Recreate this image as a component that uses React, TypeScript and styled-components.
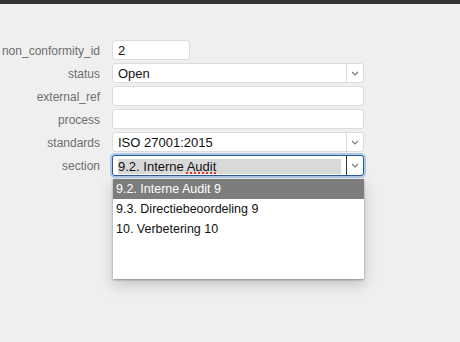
import React from "react";
import styled, { createGlobalStyle } from "styled-components";

const Global = createGlobalStyle`
  html, body { margin: 0; padding: 0; background: #efefef; }
  body { font-family: "Liberation Sans", Arial, sans-serif; width: 460px; height: 342px; overflow: hidden; }
`;

const TopBar = styled.div`
  height: 4px;
  background: #333333;
`;

const Form = styled.div`
  display: grid;
  grid-template-columns: 100px 252px;
  grid-template-rows: 20px 20px 20px 20px 20px 21px;
  column-gap: 12px;
  row-gap: 3px;
  padding-top: 36px;
`;

const Label = styled.div`
  font-size: 12px;
  color: #6e6e6e;
  text-align: right;
  height: 20px;
  line-height: 22px;
`;

const Field = styled.div<{ $w?: number; $focus?: boolean }>`
  position: relative;
  box-sizing: border-box;
  height: ${(p) => (p.$focus ? "21px" : "20px")};
  width: ${(p) => (p.$w ? `${p.$w}px` : "100%")};
  background: #fff;
  border: 1px solid ${(p) => (p.$focus ? "#2c5b92" : "#dcdcdc")};
  border-radius: 3px;
  box-shadow: ${(p) => (p.$focus ? "0 0 0 2px rgba(120,170,225,0.55)" : "none")};
  display: flex;
  align-items: center;
  font-size: 13px;
  color: #111;
`;

const Value = styled.div`
  flex: 1;
  padding-left: 5px;
  padding-top: 1px;
  line-height: 18px;
  white-space: nowrap;
  overflow: hidden;
`;

const Selected = styled.div`
  flex: 1;
  margin: 1px 5px 0 5px;
  background: #d9d9d9;
  line-height: 15px;
  white-space: nowrap;
`;

const Misspelled = styled.span`
  text-decoration: underline dotted #e23b2e;
  text-decoration-thickness: 2px;
  text-underline-offset: 2px;
`;

const ArrowBox = styled.div<{ $focus?: boolean }>`
  width: 16px;
  height: 100%;
  border-left: 1px solid ${(p) => (p.$focus ? "#333" : "#dcdcdc")};
  display: flex;
  align-items: center;
  justify-content: center;
`;

const Menu = styled.div`
  position: absolute;
  left: 113px;
  top: 179px;
  width: 251px;
  height: 100px;
  background: #fff;
  box-shadow: 0 1px 2px rgba(0,0,0,0.35), 0 6px 14px rgba(0,0,0,0.18);
  font-size: 12.5px;
  color: #111;
`;

const Option = styled.div<{ $active?: boolean }>`
  height: 20px;
  line-height: 20px;
  padding-left: 3px;
  background: ${(p) => (p.$active ? "#7d7d7d" : "transparent")};
  color: ${(p) => (p.$active ? "#fff" : "#111")};
`;

const Chevron = () => (
  <svg width="8" height="5" viewBox="0 0 8 5">
    <path d="M1 1 L4 4 L7 1" fill="none" stroke="#777" strokeWidth="1.1" />
  </svg>
);

const Select = ({ value, focus }: { value?: React.ReactNode; focus?: boolean }) => (
  <Field $focus={focus}>
    {focus ? <Selected>{value}</Selected> : <Value>{value}</Value>}
    <ArrowBox $focus={focus}>
      <Chevron />
    </ArrowBox>
  </Field>
);

export default function App() {
  return (
    <>
      <Global />
      <TopBar />
      <Form>
        <Label>non_conformity_id</Label>
        <Field $w={78}>
          <Value>2</Value>
        </Field>
        <Label>status</Label>
        <Select value="Open" />
        <Label>external_ref</Label>
        <Field />
        <Label>process</Label>
        <Field />
        <Label>standards</Label>
        <Select value="ISO 27001:2015" />
        <Label>section</Label>
        <Select
          focus
          value={
            <>
              9.2. Interne <Misspelled>Audit</Misspelled>
            </>
          }
        />
      </Form>
      <Menu>
        <Option $active>9.2. Interne Audit 9</Option>
        <Option>9.3. Directiebeoordeling 9</Option>
        <Option>10. Verbetering 10</Option>
      </Menu>
    </>
  );
}
